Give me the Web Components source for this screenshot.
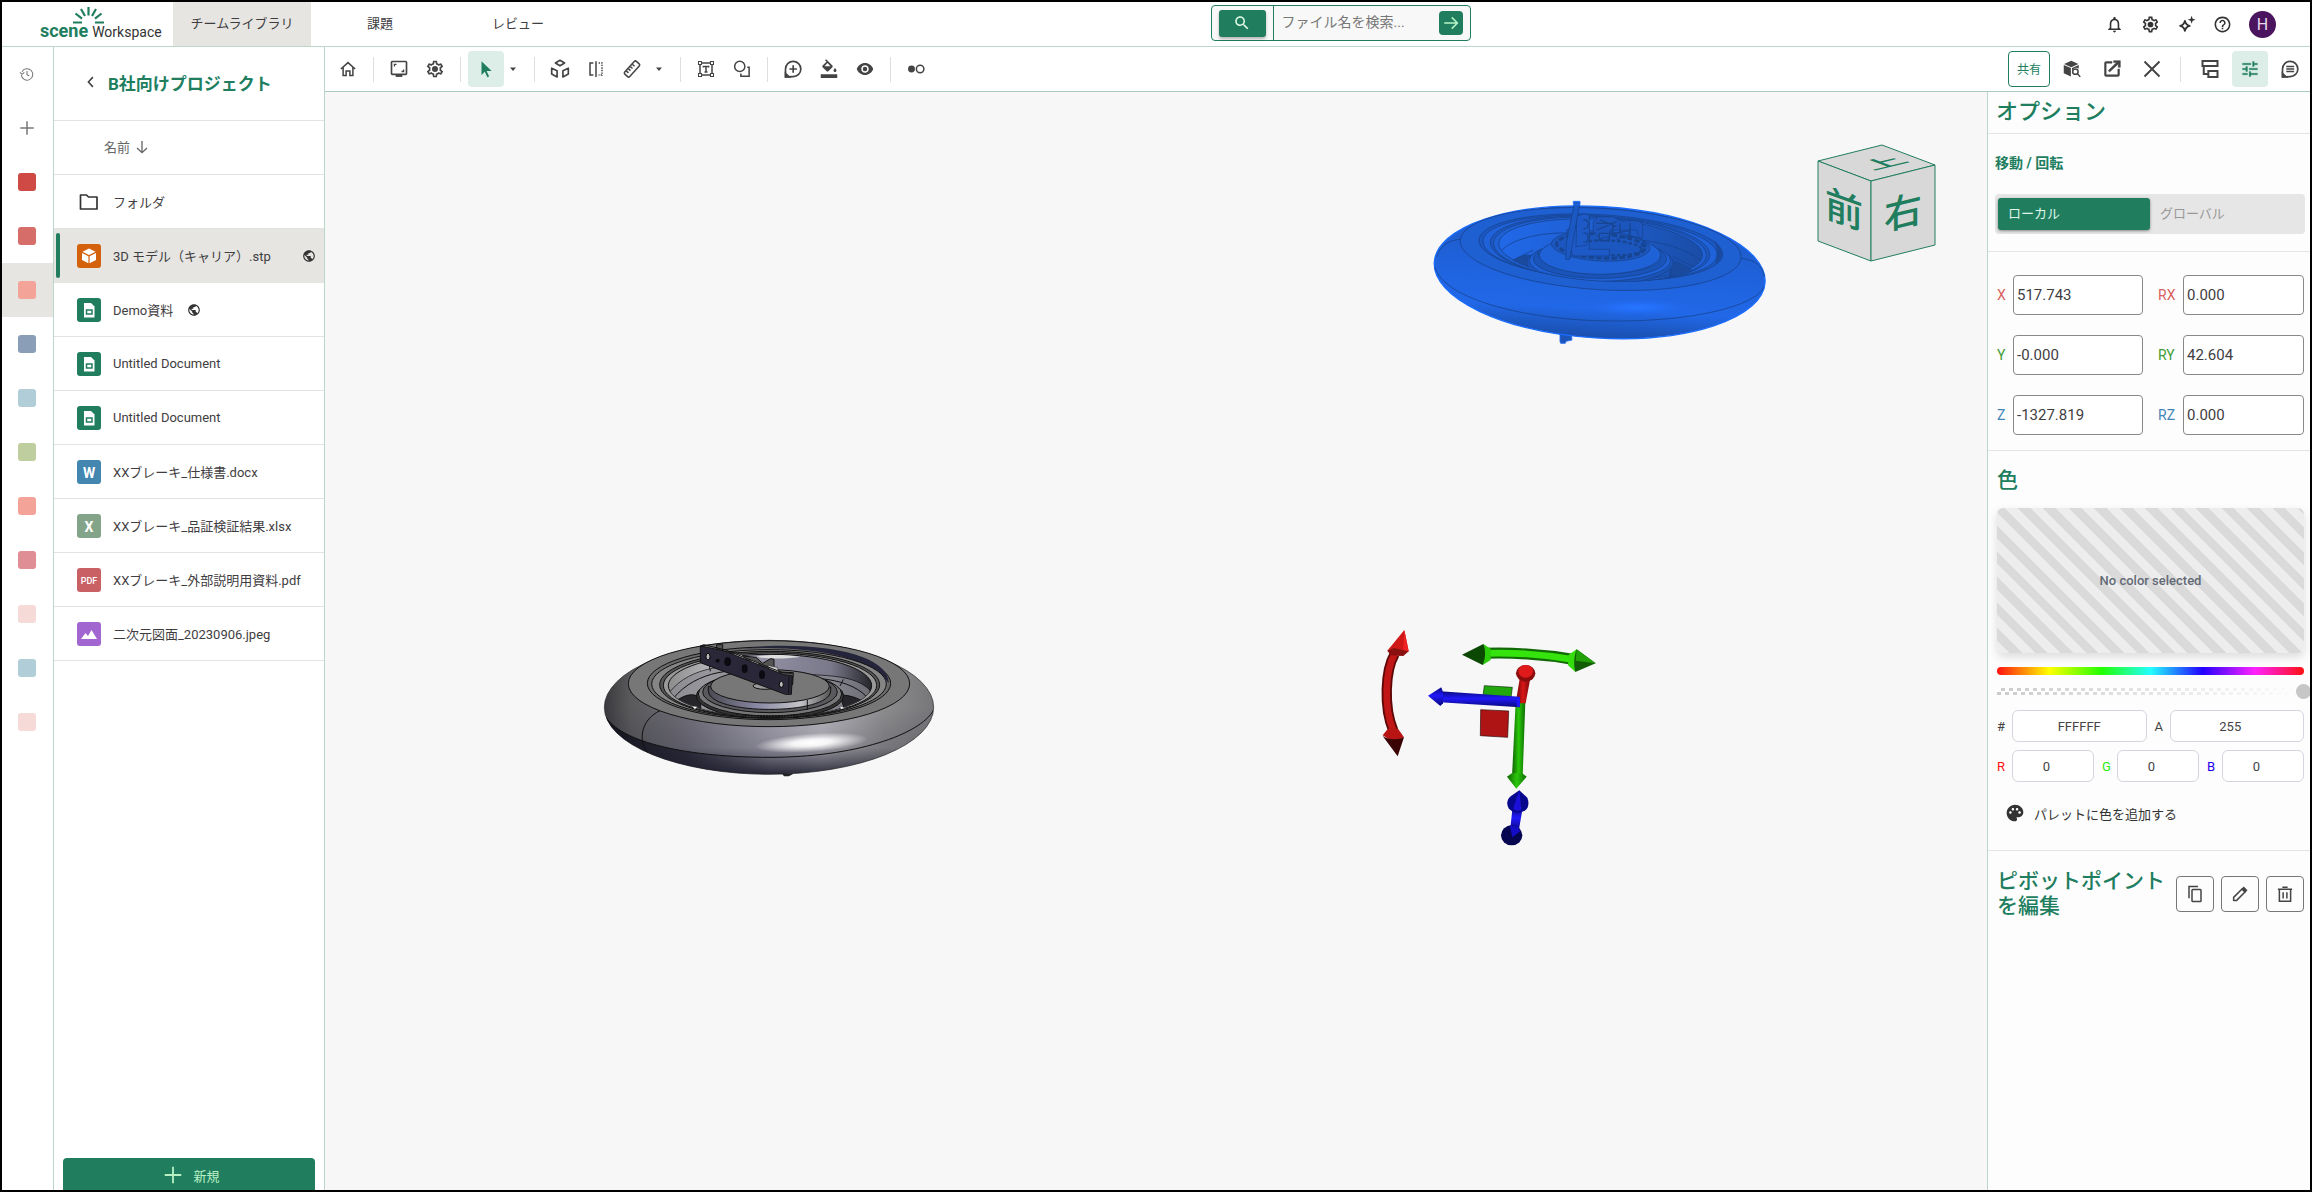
<!DOCTYPE html>
<html lang="ja">
<head>
<meta charset="utf-8">
<title>scene Workspace</title>
<style>
  html, body { height: 100%; margin: 0; }
  body {
    box-sizing: border-box; border: 2px solid #000; background: #fff; overflow: hidden;
    font-family: Roboto, "Noto Sans CJK JP", sans-serif; font-size: 13px; color: #3f3d3f;
    --green: #207e5f; --pale: #ddeee8; --line: #bcd6cc; --hair: #e4e4e4; --sel: #e6e5e1;
  }
</style>
</head>
<body>
<scene-app></scene-app>
<script>
const ICONS = {
  history: '<path d="M4.5 8.5A8.6 8.6 0 1 1 3.500 13.500M1.500 9.500l3 3 3.500-3M12 7.500V13l3.500 2" class="s1"/>',
  plus: '<path d="M12 3v18M3 12h18" class="s"/>',
  back: '<path d="M14.500 5.500 8.500 12l6 6.500" class="s"/>',
  down: '<path d="M12 3v17.500M4.500 13.500l7.500 7 7.500-7" class="s"/>',
  folder: '<path d="M3 5.500h6.500l2.500 2.500h9v11.500H3z" class="s" stroke-linejoin="round"/>',
  globe: '<path d="M12 2C6.480 2 2 6.480 2 12s4.480 10 10 10 10-4.480 10-10S17.520 2 12 2zm-1 17.930c-3.950-.49-7-3.850-7-7.930 0-.62.08-1.210.21-1.790L9 15v1c0 1.100.9 2 2 2v1.930zm6.900-2.540c-.26-.81-1-1.390-1.900-1.390h-1v-3c0-.55-.45-1-1-1H8v-2h2c.55 0 1-.45 1-1V7h2c1.100 0 2-.9 2-2v-.41c2.930 1.190 5 4.060 5 7.410 0 2.080-.8 3.970-2.100 5.390z"/>',
  bell: '<path d="M12 22c1.100 0 2-.9 2-2h-4c0 1.100.9 2 2 2zm6-6v-5c0-3.070-1.630-5.640-4.500-6.320V4c0-.83-.67-1.500-1.500-1.500s-1.500.67-1.500 1.500v.68C7.640 5.360 6 7.920 6 11v5l-2 2v1h16v-1l-2-2zm-2 1H8v-6c0-2.480 1.510-4.500 4-4.500s4 2.020 4 4.500v6z"/>',
  gear: '<path d="M19.43 12.98c.04-.32.07-.64.07-.98 0-.34-.03-.66-.07-.98l2.11-1.65c.19-.15.24-.42.12-.64l-2-3.46c-.09-.16-.26-.25-.44-.25-.06 0-.12.01-.17.03l-2.49 1c-.52-.4-1.08-.73-1.69-.98l-.38-2.65C14.46 2.18 14.25 2 14 2h-4c-.25 0-.46.18-.49.42l-.38 2.65c-.61.25-1.17.59-1.69.98l-2.49-1c-.06-.02-.12-.03-.18-.03-.17 0-.34.09-.43.25l-2 3.46c-.13.22-.07.49.12.64l2.11 1.65c-.04.32-.07.65-.07.98 0 .33.03.66.07.98l-2.11 1.65c-.19.15-.24.42-.12.64l2 3.46c.09.16.26.25.44.25.06 0 .12-.01.17-.03l2.49-1c.52.4 1.08.73 1.69.98l.38 2.65c.03.24.24.42.49.42h4c.25 0 .46-.18.49-.42l.38-2.65c.61-.25 1.17-.59 1.69-.98l2.49 1c.06.02.12.03.18.03.17 0 .34-.09.43-.25l2-3.46c.12-.22.07-.49-.12-.64l-2.11-1.65zm-1.98-1.71c.04.31.05.52.05.73 0 .21-.02.43-.05.73l-.14 1.13.89.7 1.08.84-.7 1.21-1.27-.51-1.04-.42-.9.68c-.43.32-.84.56-1.25.73l-1.06.43-.16 1.13-.2 1.35h-1.4l-.19-1.35-.16-1.13-1.06-.43c-.43-.18-.83-.41-1.23-.71l-.91-.7-1.06.43-1.27.51-.7-1.21 1.08-.84.89-.7-.14-1.13c-.03-.31-.05-.54-.05-.74s.02-.43.05-.73l.14-1.13-.89-.7-1.08-.84.7-1.21 1.27.51 1.04.42.9-.68c.43-.32.84-.56 1.25-.73l1.06-.43.16-1.13.2-1.35h1.39l.19 1.35.16 1.13 1.06.43c.43.18.83.41 1.23.71l.91.7 1.06-.43 1.27-.51.7 1.21-1.07.85-.89.7.14 1.13z"/><circle cx="12" cy="12" r="3.600"/>',
  sparkle: '<path d="M10 7.500c.8 4 2 5.300 6 6.300-4 1-5.200 2.200-6 6.200-.8-4-2-5.200-6-6.200 4-1 5.200-2.300 6-6.300z" class="s" stroke-linejoin="round" style="stroke-width:2.400"/><path d="M18.500 1l1.300 3.700 3.700 1.300-3.700 1.300-1.300 3.700-1.300-3.700L13.500 6l3.700-1.300z"/>',
  help: '<path d="M11 18h2v-2h-2v2zm1-16C6.480 2 2 6.480 2 12s4.480 10 10 10 10-4.480 10-10S17.520 2 12 2zm0 18c-4.410 0-8-3.590-8-8s3.590-8 8-8 8 3.590 8 8-3.590 8-8 8zm0-14c-2.210 0-4 1.790-4 4h2c0-1.100.9-2 2-2s2 .9 2 2c0 2-3 1.750-3 5h2c0-2.250 3-2.500 3-5 0-2.210-1.790-4-4-4z"/>',
  search: '<path d="M15.500 14h-.79l-.28-.27C15.410 12.590 16 11.110 16 9.500 16 5.910 13.090 3 9.500 3S3 5.910 3 9.500 5.910 16 9.500 16c1.610 0 3.090-.59 4.230-1.570l.27.28v.79l5 4.990L20.490 19l-4.990-5zm-6 0C7.010 14 5 11.990 5 9.500S7.010 5 9.500 5 14 7.010 14 9.500 11.990 14 9.500 14z"/>',
  right: '<path d="M3 12h17M13 4.500l7.500 7.500-7.500 7.500" class="s"/>',
  home: '<path d="M2.500 12 12 3.500l9.500 8.500M5.500 10v10.500h4v-6h5v6h4V10" class="s"/>',
  monitor: '<rect x="3" y="3" width="18" height="15.500" rx="1" class="s"/><path d="M6.500 9V6.500H9M17.500 12.500V15H15" class="s1"/><path d="M8 18h8v3.500H8z"/>',
  cursor: '<path d="M6 1.500v18.500l4.400-4.400 3.400 7.400 2.400-1.100-3.400-7.300h6.700z"/>',
  caret: '<path d="M6 9h12l-6 7z"/>',
  cubes: '<path d="M12 1.500l5.500 3.200L12 8 6.500 4.700zM2 11l6.500 3v7.500L2 18zM22 11l-6.500 3v7.500L22 18z" class="s" stroke-linejoin="round"/>',
  mirror: '<path d="M8.500 4H4v16h4.500M12 1.500v21" class="s"/><path d="M15.500 4H20v16h-4.500" class="s" stroke-dasharray="1.800 1.600"/>',
  ruler: '<g transform="rotate(-48 12 12)"><rect x="0.500" y="7.500" width="23" height="9" rx="2" class="s"/><path d="M5 8v4M9 8v4M13 8v4M17 8v4" class="s"/></g>',
  textbox: '<rect x="4" y="4" width="16" height="16" class="s"/><path d="M8.500 10V8.500h7V10M12 8.500V16M10 16h4" class="s"/><path d="M2 2h4v4H2zM18 2h4v4h-4zM2 18h4v4H2zM18 18h4v4h-4z" fill="#fff" stroke="currentColor" stroke-width="1.400"/>',
  shapes: '<circle cx="9" cy="8.500" r="6.800" class="s"/><path d="M19 9.500h2.500v12H10.500V18" class="s"/>',
  bubbleplus: '<path d="M3 21.500V12a9.200 9.200 0 1 1 9.200 9.200z" class="s"/><path d="M12.200 7.500v9M7.700 12h9" class="s"/><path d="M2 15v7.500h8z"/>',
  bucket: '<path d="M16.560 7.440 8.100-1l-1.400 1.400 2 2-5.260 5.040c-.59.59-.59 1.540 0 2.120l5.500 5.500c.29.29.68.44 1.060.44s.77-.15 1.060-.44l5.500-5.500c.59-.58.59-1.530 0-2.120zM6 8.200 10 4l4 4.200zM20 10.500s-2 2.170-2 3.500c0 1.100.9 2 2 2s2-.9 2-2c0-1.330-2-3.500-2-3.500zM1 19h22v5H1z"/>',
  eye: '<path d="M12 4C7 4 2.730 7.410 1 12c1.730 4.590 6 8 11 8s9.270-3.410 11-8c-1.730-4.590-6-8-11-8zM12 17c-2.760 0-5-2.240-5-5s2.240-5 5-5 5 2.240 5 5-2.240 5-5 5z" /><circle cx="12" cy="12" r="3"/>',
  dots: '<circle cx="6" cy="12" r="4.600"/><circle cx="17.500" cy="12" r="5" class="s"/>',
  cubesearch: '<path d="M11 1l9.500 4.200L11 9.500 1.500 5.200z"/><path d="M1 6.500l9.500 4.200V22L1 17.500zM12 10.700l9-4.100v5a5.500 5.500 0 0 0-9 4z"/><circle cx="16.500" cy="15.500" r="3.600" class="s"/><path d="M19 18l4 4.500" class="s"/>',
  external: '<path d="M19 19H5V5h7V3H5a2 2 0 0 0-2 2v14a2 2 0 0 0 2 2h14c1.100 0 2-.9 2-2v-7h-2v7zM14 2v2.300h3.400l-9.830 9.630 1.610 1.610L19.500 6V10H22V2z" stroke="currentColor" stroke-width=".6"/>',
  close: '<path d="M2 2l20 20M22 2 2 22" class="s" style="stroke-width:2.600"/>',
  tree: '<path d="M3 2.500h18v6H3zM10 14.500h11v7H10zM4.500 8.500V18H10" class="s" style="stroke-width:2.400"/>',
  tune: '<path d="M3 17v2h6v-2H3zM3 5v2h10V5H3zm10 16v-2h8v-2h-8v-2h-2v6h2zM7 9v2H3v2h4v2h2V9H7zm14 4v-2H11v2h10zm-6-4h2V7h4V5h-4V3h-2v6z" stroke="currentColor" stroke-width=".3"/>',
  comment: '<path d="M3 21.500V12a9.200 9.200 0 1 1 9.200 9.200z" class="s"/><path d="M7.500 9h9.500M7.500 12h9.500M7.500 15h9.500" class="s1"/><path d="M2 15v7.500h8z"/>',
  palette: '<path d="M12 2C6.490 2 2 6.490 2 12s4.490 10 10 10c1.380 0 2.500-1.120 2.500-2.500 0-.61-.23-1.200-.64-1.670-.08-.1-.13-.21-.13-.33 0-.28.22-.5.5-.5H16c3.310 0 6-2.690 6-6 0-4.960-4.490-9-10-9zm5.500 11c-.83 0-1.500-.67-1.500-1.500s.67-1.500 1.500-1.500 1.500.67 1.500 1.500-.67 1.500-1.500 1.500zm-3-4c-.83 0-1.500-.67-1.500-1.500S13.670 6 14.500 6s1.500.67 1.500 1.500S15.330 9 14.500 9zM5 11.500c0-.83.67-1.500 1.500-1.500s1.500.67 1.500 1.500S7.330 13 6.500 13 5 12.330 5 11.500zm6-4c0 .83-.67 1.500-1.500 1.500S8 8.330 8 7.500 8.670 6 9.500 6s1.500.67 1.500 1.500z"/>',
  copy: '<path d="M4 17.500V2h12" class="s"/><rect x="8" y="6" width="12" height="16" rx="1" class="s"/>',
  edit: '<path d="M3.500 20.500v-4L15 5l4 4L7.500 20.500z" class="s" stroke-linejoin="round"/><path d="M13.500 5.500 17 2l5 5-3.500 3.500z"/>',
  trash: '<path d="M4.500 6v15.500h15V6" class="s"/><path d="M2.500 5.500h19M8.500 3h7M9.500 9.500V18M14.500 9.500V18" class="s"/>',
};

function define(name, css, html) {
  const tpl = document.createElement('template');
  tpl.innerHTML = `<style>*{box-sizing:border-box}
    button,input{font:inherit;color:inherit;margin:0} button{padding:0;border:0;background:none;cursor:pointer}
    a{color:inherit;text-decoration:none} h1,h2,h3{margin:0;font:inherit}
    ${css}</style>${html}`;
  customElements.define(name, class extends HTMLElement {
    connectedCallback() {
      if (!this.shadowRoot) this.attachShadow({ mode: 'open' }).append(tpl.content.cloneNode(true));
    }
  });
}

customElements.define('ui-icon', class extends HTMLElement {
  connectedCallback() {
    if (this.shadowRoot) return;
    this.attachShadow({ mode: 'open' }).innerHTML = `<style>
      :host{display:block;flex:none;width:var(--icon,18px);height:var(--icon,18px)}
      svg{display:block;width:100%;height:100%;fill:currentColor;overflow:visible}
      .s{fill:none;stroke:currentColor;stroke-width:2}.s1{fill:none;stroke:currentColor;stroke-width:1.600}
    </style><svg viewBox="0 0 24 24" aria-hidden="true">${ICONS[this.getAttribute('name')]}</svg>`;
  }
});

/* Square toolbar button */
customElements.define('tool-button', class extends HTMLElement {
  connectedCallback() {
    if (this.shadowRoot) return;
    this.attachShadow({ mode: 'open' }).innerHTML = `<style>
      :host{display:block;flex:none}
      button{display:flex;align-items:center;justify-content:center;width:36px;height:36px;padding:0;border:0;
        border-radius:4px;background:none;color:#444;font:inherit;cursor:pointer}
      :host([large]) button{--icon:20px}
      :host([active]) button{background:var(--pale);color:var(--green)}
      :host([caret]) button{width:23px;justify-content:flex-start;padding-left:3px;--icon:12px}
      :host([framed]) button{width:38px;border:1px solid #777}
    </style><button type="button" aria-label="${this.getAttribute('label')}"><ui-icon name="${this.getAttribute('icon')}"></ui-icon></button>`;
  }
});

define('scene-header', `
  :host{display:flex;height:45px;border-bottom:1px solid var(--line);align-items:stretch}
  .logo{width:171px;display:flex;flex-direction:column;align-items:center;padding-top:4px}
  .logo svg{display:block;width:34px;height:19px}
  .word{display:flex;gap:4px;align-items:baseline;align-self:flex-start;line-height:20px;margin:-4px 0 0 38px}
  b{font-size:18px;color:var(--green);font-weight:700}
  span{font-size:14px;color:#333}
  nav{display:flex}
  nav a{width:138px;display:flex;align-items:center;justify-content:center;padding-bottom:3px}
  nav a[aria-current]{background:var(--sel)}
  form{flex:1;display:flex;justify-content:center;align-items:center;margin:0;padding:0 2px 2px 0}
  .box{display:flex;align-items:center;width:260px;height:36px;border:1px solid var(--green);border-radius:4px;background:#f8f8f8;padding-right:7px}
  .mode{margin:0 7px;width:47px;height:27px;border-radius:3px;background:var(--green);color:#e4fbe8;display:flex;align-items:center;justify-content:center;box-shadow:0 2px 3px #0004;--icon:18px}
  input{flex:1;min-width:0;height:34px;border:0;border-left:1px solid var(--green);background:none;padding:0 8px 2px;font-size:14px;outline:0}
  input::placeholder{color:#777;opacity:1}
  .go{width:24px;height:24px;border-radius:4px;background:var(--green);color:#b8f5c6;display:flex;align-items:center;justify-content:center;--icon:18px}
  .acts{display:flex;align-items:center;color:#333;padding-right:34px;--icon:19px}
  .acts button{width:36px;height:36px;display:flex;align-items:center;justify-content:center}
  .acts .me{width:27px;height:27px;border-radius:50%;background:#4b145e;color:#e8dcec;font-size:16px;margin-left:9px}
`, `
  <div class="logo">
    <svg viewBox="72 6 34 19" fill="none" stroke="#207e5f" stroke-width="2.200" aria-hidden="true">
      <path d="M89.500 7v8.500M82 9l4 7M97 9l-4 7M76.500 13.500l6.500 5.200M102.500 13.500l-6.500 5.200M74 22.500h9M96 22.500h9"/></svg>
    <div class="word"><b>scene</b><span>Workspace</span></div>
  </div>
  <nav><a href="#" aria-current="page">チームライブラリ</a><a href="#">課題</a><a href="#">レビュー</a></nav>
  <form><div class="box">
    <button type="button" class="mode" aria-label="検索"><ui-icon name="search"></ui-icon></button>
    <input type="text" aria-label="ファイル名を検索" placeholder="ファイル名を検索...">
    <button type="button" class="go" aria-label="実行"><ui-icon name="right"></ui-icon></button>
  </div></form>
  <div class="acts">
    <button type="button" aria-label="通知"><ui-icon name="bell"></ui-icon></button>
    <button type="button" aria-label="設定"><ui-icon name="gear"></ui-icon></button>
    <button type="button" aria-label="AI"><ui-icon name="sparkle"></ui-icon></button>
    <button type="button" aria-label="ヘルプ"><ui-icon name="help"></ui-icon></button>
    <button type="button" class="me">H</button>
  </div>`);

define('project-rail', `
  :host{display:flex;flex-direction:column;flex:none;width:52px;border-right:1px solid var(--line);color:#777}
  button{height:54px;display:flex;align-items:center;justify-content:center;padding-right:1px;--icon:16px}
  button[aria-pressed]{background:var(--sel)}
  i{width:18px;height:18px;border-radius:3px;background:var(--c)}
  .add{--icon:18px}
`, `<button type="button" aria-label="履歴"><ui-icon name="history"></ui-icon></button>
  <button type="button" class="add" aria-label="追加"><ui-icon name="plus"></ui-icon></button>` +
  ['#d04a45', '#d66d69', '#f4a398', '#8a9eb8', '#b0cdd8', '#bfce9e', '#f4a398', '#e08e95', '#f6dad8', '#b0cdd8', '#f6dad8']
    .map((c, i) => `<button type="button" aria-label="プロジェクト ${i + 1}"${i === 2 ? ' aria-pressed="true"' : ''}><i style="--c:${c}"></i></button>`).join(''));

/* One row of the file list; the name is slotted */
const BADGES = {
  folder: ['none', '<path d="M3.500 5h6l2 2h8.500v12H3.500z" fill="none" stroke="#333" stroke-width="1.700" stroke-linejoin="round"/>'],
  model: ['#d4620c', '<path d="M12 4.500l6.500 3.300L12 11 5.500 7.800zM5 9l6.400 3.200v7L5 16zM19 9l-6.400 3.200v7L19 16z" fill="#fff"/>'],
  doc: ['#207e5f', '<path d="M7 5h7l3.500 3.500V19.500H7z" fill="#fff"/><path d="M9.500 12h5.500v4H9.500z" fill="none" stroke="#207e5f" stroke-width="1.500"/>'],
  word: ['#4386b0', '<text x="12" y="17.500">W</text>'],
  excel: ['#84a489', '<text x="12" y="17.500">X</text>'],
  pdf: ['#c96063', '<text x="12" y="15.500" style="font-size:9px;font-weight:500">PDF</text>'],
  image: ['#a266d0', '<path d="M4 17l4.500-6 2.500 3L14.500 8 20 17z" fill="#fff"/>'],
};
customElements.define('file-row', class extends HTMLElement {
  connectedCallback() {
    if (this.shadowRoot) return;
    const [bg, art] = BADGES[this.getAttribute('kind')];
    this.attachShadow({ mode: 'open' }).innerHTML = `<style>
      :host{display:block;height:54px;border-bottom:1px solid #e2e2e2}
      a{display:flex;align-items:center;height:100%;padding:0 8px 0 19px;border-left:4px solid transparent;color:inherit;text-decoration:none;--icon:14px}
      :host([selected]){background:var(--sel);border-bottom-color:var(--sel)}
      :host([selected]) a{padding-left:17px;border:0}
      .mark{display:none;width:4px;height:45px;border-radius:2px;background:var(--green);margin-left:-15px;margin-right:17px}
      :host([selected]) .mark{display:block}
      svg{width:24px;height:24px;border-radius:3px;background:${bg};margin-right:12px;flex:none}
      text{font:700 14px Roboto,sans-serif;fill:#fff;text-anchor:middle}
      ui-icon{margin-left:14px;color:#333} :host([selected]) ui-icon{margin-left:auto}
    </style><a href="#"><span class="mark"></span><svg viewBox="0 0 24 24" aria-hidden="true">${art}</svg><slot></slot>${
      this.hasAttribute('shared') ? '<ui-icon name="globe"></ui-icon>' : ''}</a>`;
  }
});

define('file-panel', `
  :host{display:flex;flex-direction:column;flex:none;width:271px;border-right:1px solid var(--line)}
  header{display:flex;align-items:center;height:74px;border-bottom:1px solid #e2e2e2;padding:0 0 3px 28px;gap:8px}
  h1{font-size:17px;font-weight:700;color:var(--green)}
  .sort{display:flex;align-items:center;gap:4px;height:54px;width:100%;padding:0 0 2px 50px;border-bottom:1px solid #e2e2e2;color:#666;--icon:16px}
  .list{flex:1}
  .new{display:flex;align-items:center;justify-content:center;gap:9px;height:32px;margin:0 9px;padding:2px 0 0 4px;border-radius:4px 4px 0 0;background:var(--green);color:#b8f0c4;--icon:22px}
`, `
  <header><button type="button" aria-label="戻る"><ui-icon name="back"></ui-icon></button><h1>B社向けプロジェクト</h1></header>
  <button type="button" class="sort">名前<ui-icon name="down"></ui-icon></button>
  <div class="list">
    <file-row kind="folder">フォルダ</file-row>
    <file-row kind="model" selected shared>3D モデル（キャリア）.stp</file-row>
    <file-row kind="doc" shared>Demo資料</file-row>
    <file-row kind="doc">Untitled Document</file-row>
    <file-row kind="doc">Untitled Document</file-row>
    <file-row kind="word">XXブレーキ_仕様書.docx</file-row>
    <file-row kind="excel">XXブレーキ_品証検証結果.xlsx</file-row>
    <file-row kind="pdf">XXブレーキ_外部説明用資料.pdf</file-row>
    <file-row kind="image">二次元図面_20230906.jpeg</file-row>
  </div>
  <button type="button" class="new"><ui-icon name="plus"></ui-icon>新規</button>`);

const tool = (icon, label, extra = '') => `<tool-button icon="${icon}" label="${label}" ${extra}></tool-button>`;
define('view-toolbar', `
  :host{display:flex;align-items:center;justify-content:space-between;height:45px;border-bottom:1px solid #a9ccbf;padding:0 2px 0 5px}
  div{display:flex;align-items:center}
  .right{gap:4px}
  hr{width:1px;height:25px;border:0;background:#dedede;margin:0 7px}
  .right hr{margin:0 7px 0 6px}
  .share{width:42px;height:36px;border:1px solid var(--green);border-radius:4px;color:var(--green);font-size:12px;padding-bottom:1px}
`, `
  <div>${tool('home', 'ホーム')}<hr>${tool('monitor', '表示', 'large')}${tool('gear', '設定', 'large')}<hr>${tool('cursor', '選択', 'active')}${tool('caret', '選択メニュー', 'caret')}<hr>${
    tool('cubes', '分解', 'large')}${tool('mirror', '断面')}${tool('ruler', '計測')}${tool('caret', '計測メニュー', 'caret')}<hr>${tool('textbox', 'テキスト')}${tool('shapes', '図形')}<hr>${
    tool('bubbleplus', 'コメント追加', 'large')}${tool('bucket', '塗りつぶし')}${tool('eye', '表示切替')}<hr>${tool('dots', '遷移')}</div>
  <div class="right"><button type="button" class="share">共有</button>${tool('cubesearch', 'モデル検索')}${tool('external', '別ウィンドウ', 'large')}${tool('close', '閉じる')}<hr>${
    tool('tree', 'ツリー', 'large')}${tool('tune', 'オプション', 'active large')}${tool('comment', 'コメント', 'large')}</div>`);

define('model-viewport', `
  :host{display:block;flex:1;min-width:0;background:#f7f7f7;overflow:hidden}
  svg{display:block;width:100%;height:100%}
  text{font:500 38px "Noto Sans CJK JP",sans-serif;fill:var(--green);text-anchor:middle}
`, `
<svg viewBox="325 92 1662 1098" role="img" aria-label="3D ビュー">
  <defs>
    <linearGradient id="tyre" x1="0" x2="1"><stop offset="0" stop-color="#3a3a3e"/><stop offset=".08" stop-color="#5a5a5c"/><stop offset=".25" stop-color="#6e6d78"/><stop offset=".5" stop-color="#a19fac"/><stop offset=".66" stop-color="#b9b8bf"/><stop offset=".85" stop-color="#8c8c8e"/><stop offset="1" stop-color="#77777a"/></linearGradient>
    <linearGradient id="shade" x1="0" y1="0" x2="0" y2="1"><stop offset=".5" stop-color="#223" stop-opacity="0"/><stop offset=".8" stop-color="#223" stop-opacity=".2"/><stop offset="1" stop-color="#112" stop-opacity=".85"/></linearGradient>
    <radialGradient id="shine"><stop offset="0" stop-color="#fff"/><stop offset=".35" stop-color="#fff" stop-opacity=".9"/><stop offset="1" stop-color="#fff" stop-opacity="0"/></radialGradient>
    <linearGradient id="bowl" x1="0" x2="1"><stop offset="0" stop-color="#8d8d8d"/><stop offset=".2" stop-color="#b5b4b8"/><stop offset=".5" stop-color="#8f8da0"/><stop offset=".8" stop-color="#7a798a"/><stop offset="1" stop-color="#26262c"/></linearGradient>
    <linearGradient id="hub" x1="0" x2="1"><stop offset="0" stop-color="#4a4a52"/><stop offset=".4" stop-color="#8a88a4"/><stop offset=".75" stop-color="#c4c4c8"/><stop offset="1" stop-color="#555"/></linearGradient>
    <linearGradient id="under" x1="0" x2="1"><stop offset="0" stop-color="#14141e"/><stop offset=".25" stop-color="#1c1c2c" stop-opacity=".8"/><stop offset=".5" stop-color="#1c1c2c" stop-opacity="0"/></linearGradient>
    <linearGradient id="btyre" x1="0" y1="0" x2="0" y2="1"><stop offset="0" stop-color="#1d58c0"/><stop offset=".5" stop-color="#1f62dc"/><stop offset=".78" stop-color="#2168e8"/><stop offset=".9" stop-color="#1d5ac6"/><stop offset="1" stop-color="#1a4fae"/></linearGradient>
    <radialGradient id="bshine"><stop offset="0" stop-color="#2776ff"/><stop offset=".4" stop-color="#2470fa" stop-opacity=".8"/><stop offset="1" stop-color="#2168e8" stop-opacity="0"/></radialGradient>
    <linearGradient id="bbowl" x1="0" x2="1"><stop offset="0" stop-color="#2168e8"/><stop offset=".5" stop-color="#1e5ed0"/><stop offset="1" stop-color="#1a4da6"/></linearGradient>
    <linearGradient id="gx" x1="0" x2="1"><stop offset="0" stop-color="#0f6004"/><stop offset=".5" stop-color="#2ac80a"/><stop offset="1" stop-color="#0e6a04"/></linearGradient>
    <linearGradient id="bl" x1="0" y1="0" x2="0" y2="1"><stop offset="0" stop-color="#0a0a80"/><stop offset=".45" stop-color="#2018f8"/><stop offset="1" stop-color="#08087a"/></linearGradient>
    <linearGradient id="rd" x1="0" x2="1"><stop offset="0" stop-color="#6a0808"/><stop offset=".5" stop-color="#d81616"/><stop offset="1" stop-color="#7a0a0a"/></linearGradient>
    <clipPath id="body"><ellipse cx="537" cy="262" rx="494" ry="201"/></clipPath>
    <clipPath id="rim"><ellipse cx="540" cy="197" rx="305" ry="94"/></clipPath>
    <clipPath id="brim"><ellipse cx="542" cy="178" rx="312" ry="94" transform="rotate(4 542 178)"/></clipPath>
  </defs>

  <!-- wheel, default material -->
  <g transform="translate(590 620) scale(.333333)" fill="none" stroke="#111" stroke-width="3">
    <path d="M572 455h36v8l-12 6h-14z" fill="#222" stroke="none"/>
    <ellipse cx="537" cy="262" rx="494" ry="201" fill="url(#tyre)" stroke="none"/>
    <ellipse cx="537" cy="262" rx="494" ry="201" fill="url(#shade)" stroke="#222" stroke-width="2"/>
    <g clip-path="url(#body)">
      <path d="M44 285C90 370 300 412 540 412 790 412 990 345 1031 270V480H44z" fill="url(#under)" stroke="none"/>
      <path d="M44 285C90 370 300 412 540 412 790 412 990 345 1031 270"/>
      <path d="M210 272C150 300 140 370 182 408"/>
    </g>
    <ellipse cx="665" cy="368" rx="170" ry="28" fill="url(#shine)" stroke="none" transform="rotate(-4 665 368)"/>
    <ellipse cx="537" cy="191" rx="422" ry="129" fill="#777"/>
    <ellipse cx="537" cy="190" rx="365" ry="109" fill="#6b6b6b"/>
    <path d="M420 90C600 70 840 100 896 190c4-60-110-118-359-112z" fill="#24243a" stroke="none"/>
    <ellipse cx="537" cy="192" rx="352" ry="103" fill="#858585"/>
    <ellipse cx="539" cy="194" rx="330" ry="100" fill="#555"/>
    <ellipse cx="540" cy="196" rx="320" ry="97" fill="#999"/>
    <ellipse cx="540" cy="197" rx="305" ry="94" fill="url(#bowl)"/>
    <g clip-path="url(#rim)">
      <path d="M240 215C300 140 420 125 540 150s240 0 300 60v90H240z" fill="#8b8a92" opacity=".7"/>
      <path d="M250 235C320 150 440 140 540 160s220 0 290 70"/>
      <path d="M262 240c30-20 60-22 70 0v60h-60zM750 225c40 0 60 15 80 25l-60 40z" fill="#26262a"/>
      <ellipse cx="540" cy="228" rx="221" ry="68" fill="#333"/>
      <ellipse cx="540" cy="222" rx="215" ry="66" fill="#77777a"/>
      <ellipse cx="540" cy="216" rx="202" ry="62" fill="#5a5a5e"/>
      <path d="M340 272c60 22 340 22 400 0M365 284c70 14 290 14 350 0" stroke-dasharray="6 3" stroke-width="5"/>
    </g>
    <path d="M500 110c30-8 90-6 130 0-30 6-100 8-130 0z" fill="#ddd" stroke="none"/>
    <path d="M357 130l4 24M760 178l-10 20"/>
    <path d="M355 212c0 75 367 75 367 0v-12H355z" fill="url(#hub)"/>
    <ellipse cx="540" cy="199" rx="178" ry="50" fill="#777"/>
    <path d="M652 240v30"/>
    <path d="M305 258l18 2-8 8zM750 258l16 6-14 4z" fill="#fff" stroke="#111" stroke-width="1"/>
    <ellipse cx="525" cy="198" rx="36" ry="10" fill="#999"/>
    <path d="M380 98V74h18v28l40-6 20 12 40 4 20 18 24-14 10 2v24l20 14 38 2-2 36z" fill="#555"/>
    <path d="M425 100l30 4 14 16-30-6zM480 118l24 8 8 14-30-6zM532 136l30 6 6 20-30-14z" fill="#ccc" stroke-width="1.500"/>
    <path d="M331 78l70 14 180 72 26 4-3 55h-18L331 128z" fill="#2a2838"/>
    <path d="M331 78l10-4 66 16 170 68 30 2M597 170l-1 50" />
    <g fill="#0a0a10" stroke="none"><circle cx="383" cy="122" r="6"/><ellipse cx="413" cy="125" rx="10" ry="13"/><ellipse cx="464" cy="146" rx="9" ry="13"/><ellipse cx="516" cy="164" rx="9" ry="13"/></g>
    <g fill="#bbb" stroke="#000"><ellipse cx="354" cy="110" rx="6" ry="10"/><ellipse cx="574" cy="193" rx="6" ry="9"/></g>
  </g>

  <!-- wheel, selected -->
  <g transform="translate(1420 190) scale(.333333)" fill="none" stroke="#174592" stroke-width="2.500">
    <path d="M420 432h34l2 18-18 4-2 6h-14l-2-6z" fill="#1c54ba" stroke="#1f6cf6"/>
    <g transform="rotate(3.500 539 247)">
      <ellipse cx="539" cy="247" rx="497" ry="197" fill="url(#btyre)" stroke="#1a6cff" stroke-width="4"/>
    </g>
    <ellipse cx="655" cy="352" rx="170" ry="26" fill="url(#bshine)" stroke="none"/>
    <path d="M44 230C70 330 330 394 590 393 820 393 1000 350 1032 292"/>
    <path d="M50 200c10-35 40-50 72-52M963 205c40 5 66 20 70 55"/>
    <g transform="rotate(3.500 542 177)">
      <ellipse cx="542" cy="177" rx="422" ry="122" fill="#1e5fd2"/>
      <ellipse cx="542" cy="172" rx="366" ry="98" fill="#1b57c2"/>
      <ellipse cx="540" cy="174" rx="352" ry="96" fill="#1f62da"/>
      <ellipse cx="540" cy="176" rx="330" ry="96" fill="#1c57c2"/>
      <ellipse cx="540" cy="178" rx="320" ry="95" fill="#1f60d4"/>
      <ellipse cx="542" cy="178" rx="306" ry="90" fill="url(#bbowl)"/>
    </g>
    <path d="M880 150c30 20 36 55 4 75 10-30 10-50-4-75z" fill="#194a9e" stroke="none"/>
    <g clip-path="url(#brim)">
      <path d="M246 180C300 130 420 120 540 135s230 20 300 75M280 210l60-30M760 200l60 30"/>
      <path d="M280 212c20-15 40-20 60-14v60l-40-20zM750 215c30 0 50 15 70 30l-70 25z" fill="#194a9e"/>
      <ellipse cx="540" cy="218" rx="220" ry="66" fill="#1b53b6"/>
      <ellipse cx="540" cy="212" rx="212" ry="62" fill="#1f60d4"/>
      <ellipse cx="540" cy="207" rx="200" ry="58" fill="#1b54b8"/>
      <path d="M340 262c60 22 360 26 420-6M370 274c70 14 290 14 350 0" stroke-dasharray="6 3" stroke-width="4"/>
    </g>
    <path d="M355 190c0 80 367 80 367 10z" fill="#2063da"/>
    <ellipse cx="540" cy="195" rx="182" ry="58" fill="#1f61d6"/>
    <ellipse cx="542" cy="168" rx="148" ry="45" fill="#1c57c0" transform="rotate(3 542 168)"/>
    <ellipse cx="542" cy="168" rx="132" ry="36" stroke-width="9" stroke-dasharray="16 7" transform="rotate(3 542 168)"/>
    <ellipse cx="570" cy="172" rx="95" ry="22" stroke-width="7" stroke-dasharray="11 6" transform="rotate(3 542 168)"/>
    <path d="M440 120l20-10 48-2v70h60v20h-110z" fill="#1d5ac8"/>
    <path d="M470 78l20-6 18 2v76l-10 16-30 4z" fill="#1d5ac8"/>
    <path d="M520 95l15-15h45l20 12h50l18 8v42l-10 4-8-26h-80v20l-30 6-20-24z" fill="#1c56be"/>
    <path d="M528 100h50v30h-40v22h30v-20l60-10v24M490 90c20-6 20 30 0 26M490 130c20-6 20 30 0 26M600 100v30M630 98v50M540 90l50 20M530 120l60-25M590 150c30-20 80-10 90 20" stroke-width="4"/>
    <path d="M463 42h16l-30 166h-12l2-50z" fill="#1c58c4"/>
    <path d="M460 34h20v10h-20z" fill="#1c58c4" stroke="#1a6cff"/>
  </g>

  <!-- manipulator -->
  <g transform="translate(1360 610) scale(.333333)">
    <path d="M104 132C76 180 70 290 100 362" fill="none" stroke="#5e0808" stroke-width="31"/>
    <path d="M104 132C76 180 70 290 100 362" fill="none" stroke="#c01616" stroke-width="20"/>
    <path d="M133 60l13 64-28 14-36-16z" fill="#d01818"/><path d="M82 122l20-8 44 10-16 14-38-2z" fill="#8a1010"/><path d="M133 60l13 64-16-4z" fill="#f02222"/>
    <path d="M68 376l16-20h30l18 26-32 14z" fill="#b81414"/><path d="M68 378c18 12 46 12 64 4l-19 57z" fill="#3a0404"/>
    <path d="M370 130C480 126 560 134 650 150" fill="none" stroke="#116a06" stroke-width="33"/>
    <path d="M370 130C480 126 560 134 650 150" fill="none" stroke="#35e40c" stroke-width="20"/>
    <path d="M370 102l22 14v34l-24 15z" fill="#2ccc0a"/><path d="M306 134l64-32c8 20 6 45-2 63z" fill="#0b4804"/>
    <path d="M650 118l-24 16-2 32 22 20z" fill="#34dd0c"/><path d="M650 118l57 42-61 26c-6-20-4-48 4-68z" fill="#125c06"/><path d="M650 118l57 42-60-8z" fill="#22a008"/>
    <path d="M373 227l84 5-4 30-84-4z" fill="#22a80c" stroke="#0a2a06" stroke-width="2"/>
    <path d="M362 299l84 4-3 79-82-5z" fill="#ae1414" stroke="#2a0a0a" stroke-width="2"/>
    <path d="M467 275h29l-8 225h-32z" fill="url(#gx)"/>
    <path d="M441 500l14-10h32l13 10-31 36z" fill="url(#gx)"/><path d="M441 500c20 8 40 8 59 0l-31 12z" fill="#2ab80c" opacity=".6"/>
    <path d="M480 200l31 4-14 76h-30z" fill="url(#rd)"/>
    <ellipse cx="497" cy="190" rx="29" ry="25" fill="#8a0c0c"/><ellipse cx="497" cy="184" rx="22" ry="19" fill="#e01a1a"/>
    <path d="M240 244l240 16v32l-240-15z" fill="url(#bl)"/><path d="M470 290V262l10 1v28z" fill="#2018f8"/>
    <path d="M204 257l40-25 5 14v34l-8 8z" fill="url(#bl)"/>
    <path d="M458 590l30 4-12 70h-26z" fill="url(#bl)"/>
    <path d="M478 541l24 22c6 14 4 30-6 38-18 12-40 8-50-6-8-14-4-28 6-36z" fill="#08088c"/><path d="M478 541l6 60c-16 4-22 0-24-6z" fill="#1a10d8"/>
    <ellipse cx="455" cy="676" rx="32" ry="30" fill="#050550"/><path d="M449 646l24 4 8 14-24 18z" fill="#140cc4"/>
  </g>

  <!-- view cube -->
  <g stroke="#207e5f" stroke-width="1" fill="#d8d8d8" stroke-linejoin="round">
    <path d="M1818 161l64-16 53 20-64 16z"/><path d="M1818 161l53 20v80l-53-20z"/><path d="M1871 181l64-16v80l-64 16z"/>
  </g>
  <text transform="matrix(1 .36 0 1 1844 209)" y="14">前</text>
  <text transform="matrix(1 -.24 0 1 1903 212)" y="14">右</text>
  <text transform="matrix(1 -.24 .6 .22 1883 163)" y="14">上</text>
</svg>`);

const field = (id, color, value) => `<label for="${id}" style="color:${color}">${id.toUpperCase()}</label><input id="${id}" type="text" value="${value}">`;
define('option-panel', `
  :host{display:block;flex:none;width:323px;border-left:1px solid var(--line);background:#fdfdfd;overflow:hidden}
  section{border-bottom:1px solid #e4e6e5}
  h2{font-size:21px;font-weight:500;line-height:25px;color:var(--green)}
  h3{font-size:14px;font-weight:700;line-height:20px;color:var(--green)}
  .top{padding:7px 8px 9px}
  .top h2{font-size:22px}
  .mode{padding:19px 5px 17px 7px}
  .seg{display:grid;grid-template-columns:152px 1fr;height:40px;margin-top:21px;padding:4px 3px 4px;border-radius:4px;background:#e6e6e6}
  .seg button{text-align:left;padding:0 0 3px 10px;border-radius:3px;color:#999}
  .seg button[aria-pressed=true]{background:var(--green);color:#dff5ea;box-shadow:0 1px 3px #0006}
  .xyz{display:grid;grid-template-columns:16px 130px 40px 1fr;row-gap:20px;align-items:center;padding:23px 6px 15px 9px}
  .xyz label{font-size:14px} .xyz label:nth-of-type(even){padding-left:15px}
  .xyz input{width:100%;height:40px;border:1px solid #888;border-radius:4px;background:#fff;padding:0 3px;font-size:15px}
  .color{padding:17px 6px 27px 9px;color:#444}
  .none{display:flex;align-items:center;justify-content:center;height:145px;margin-top:15px;border-radius:6px;color:#636a76;font-weight:500;
    background:repeating-linear-gradient(45deg,#ededed 0 9px,#dadada 9px 18px);box-shadow:0 4px 10px #0002}
  input[type=range]{appearance:none;display:block;width:100%;background:none}
  .hue{height:8px;border-radius:4px}
  input.hue[type=range]{margin-top:14px;background:linear-gradient(90deg,#f11,#ff0 17%,#2f0 34%,#2ff 50%,#20f 67%,#f2f 84%,#f11)}
  .hue::-webkit-slider-thumb{appearance:none;width:1px;height:1px}
  .alpha{margin-top:9px;height:15px;background:linear-gradient(90deg,#fdfdfd00,#fdfdfd) center/100% 7px no-repeat,
    conic-gradient(#ccc 25%,#fff 0 50%,#ccc 0 75%,#fff 0) left 4px/8px 7px repeat-x}
  .alpha input{width:calc(100% + 14px);height:15px;margin:0 -7px}
  .alpha input::-webkit-slider-thumb{appearance:none;width:15px;height:15px;border-radius:50%;background:#c6c6c6}
  .codes{display:flex;align-items:center;gap:8px;margin-top:8px}
  .alpha + .codes{margin-top:11px}
  .codes label{width:7px;flex:none}
  .codes input{flex:1 1 20px;min-width:0;height:32px;border:1px solid #d3d6de;border-radius:6px;background:#fff;text-align:center;padding:0 13px 0 0}
  .codes #hex{padding:0}
  .addc{display:flex;align-items:center;gap:9px;margin:21px 0 0 8px;height:20px;color:#333;--icon:20px}
  .pivot{display:flex;align-items:center;justify-content:space-between;padding:18px 6px 0 9px}
  .pivot h2{flex:1} .pivot div{display:flex;gap:7px}
`, `
  <section class="top"><h2>オプション</h2></section>
  <section class="mode"><h3>移動 / 回転</h3>
    <div class="seg"><button type="button" aria-pressed="true">ローカル</button><button type="button" aria-pressed="false">グローバル</button></div></section>
  <section class="xyz">${field('x', '#d9605f', '517.743')}${field('rx', '#d9605f', '0.000')}${field('y', '#3f9c35', '-0.000')}${field('ry', '#3f9c35', '42.604')}${field('z', '#4386b8', '-1327.819')}${field('rz', '#4386b8', '0.000')}</section>
  <section class="color"><h2>色</h2>
    <div class="none">No color selected</div>
    <input type="range" class="hue" aria-label="色相" min="0" max="360" value="0">
    <div class="alpha"><input type="range" aria-label="不透明度" min="0" max="255" value="255"></div>
    <div class="codes"><label for="hex">#</label><input id="hex" type="text" value="FFFFFF"><label for="a">A</label><input id="a" type="text" value="255"></div>
    <div class="codes">${field('r', '#f11', '0')}${field('g', '#2e1', '0')}${field('b', '#20e', '0')}</div>
    <button type="button" class="addc"><ui-icon name="palette"></ui-icon>パレットに色を追加する</button>
  </section>
  <div class="pivot"><h2>ピボットポイントを編集</h2><div>${tool('copy', 'コピー', 'framed')}${tool('edit', '編集', 'framed')}${tool('trash', '削除', 'framed')}</div></div>`);

define('scene-app', `
  :host{display:flex;flex-direction:column;height:100%;overflow:hidden}
  .body{flex:1;min-height:0;display:flex}
  main{flex:1;min-width:0;display:flex;flex-direction:column}
  .work{flex:1;min-height:0;display:flex}
`, `<scene-header></scene-header>
  <div class="body"><project-rail></project-rail><file-panel></file-panel>
    <main><view-toolbar></view-toolbar><div class="work"><model-viewport></model-viewport><option-panel></option-panel></div></main></div>`);
</script>
</body>
</html>
